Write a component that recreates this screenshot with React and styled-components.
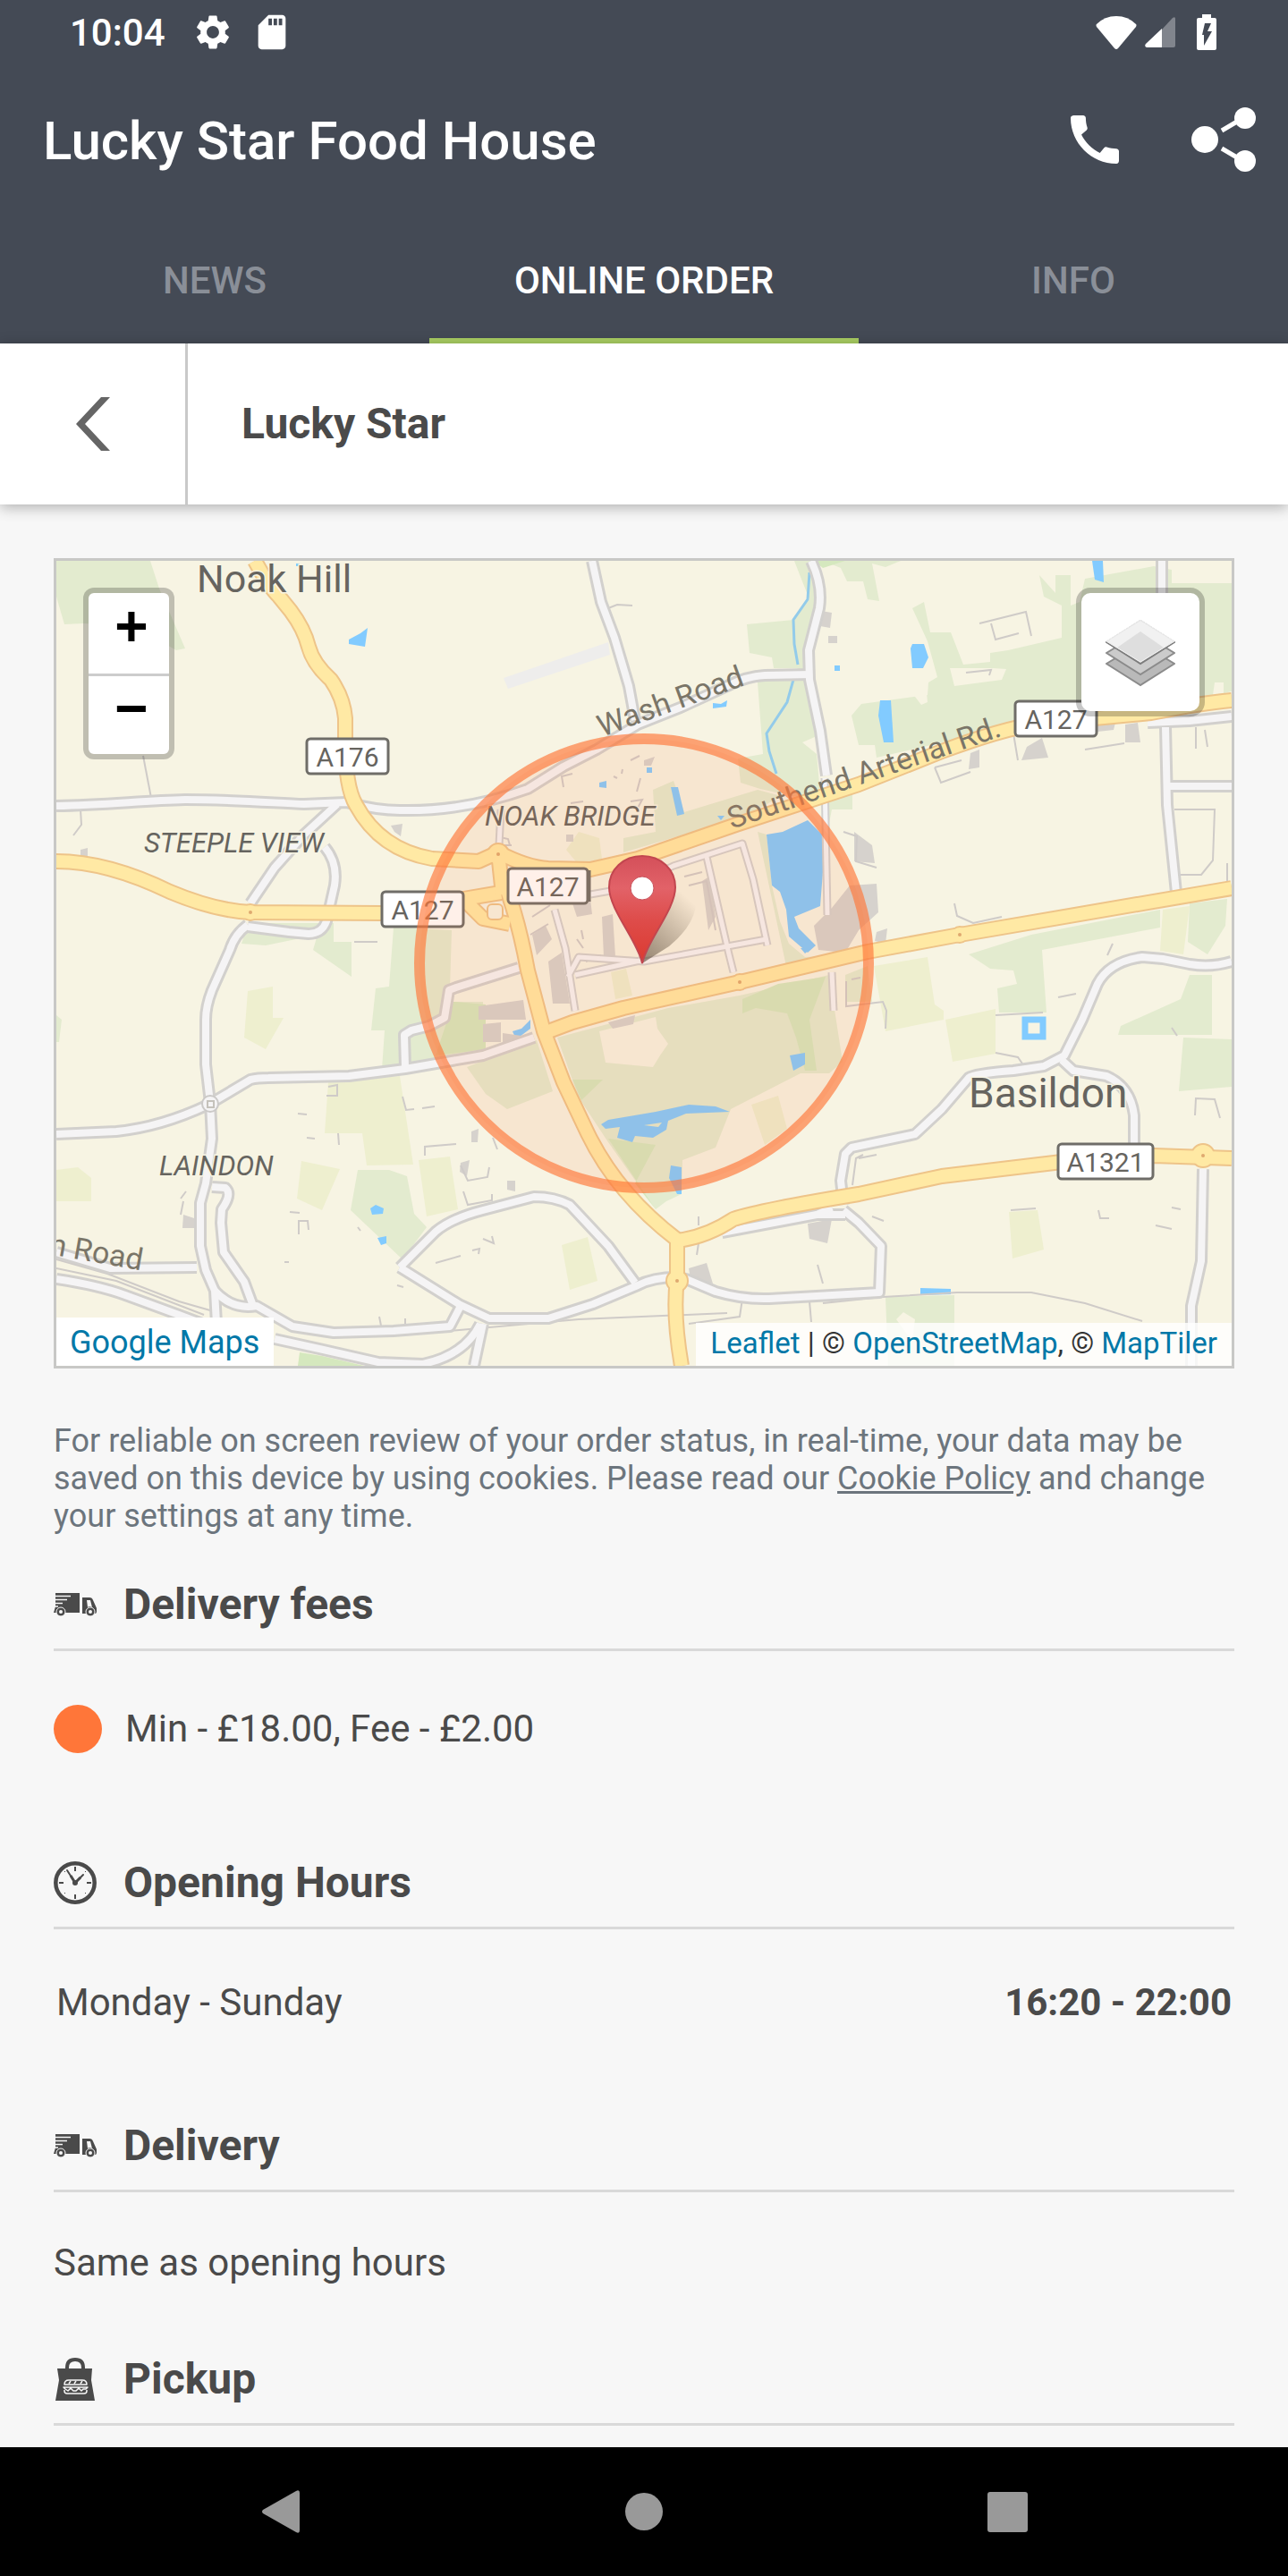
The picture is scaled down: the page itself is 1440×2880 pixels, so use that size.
import { useState } from "react";
import styled, { createGlobalStyle } from "styled-components";
import { MdCall, MdSdCard, MdSettings } from "react-icons/md";

const GlobalStyle = createGlobalStyle`
	* {
		box-sizing: border-box;
	}
	body {
		margin: 0;
		background: #f7f7f7;
		color: #4a4a4a;
		font-family: Roboto, sans-serif;
	}
	button {
		padding: 0;
		border: 0;
		background: none;
		font-family: inherit;
		cursor: pointer;
	}
	svg {
		display: block;
		flex-shrink: 0;
	}
`;

const Screen = styled.div`
	min-height: 100vh;
	display: flex;
	flex-direction: column;
`;

const Header = styled.header`
	background: #444a55;
	color: #fff;
`;

const StatusBar = styled.div`
	height: 72px;
	padding: 0 80px 0 78px;
	display: flex;
	align-items: center;
	justify-content: space-between;
`;

const StatusGroup = styled.div`
	display: flex;
	align-items: center;
	gap: ${(props) => props.$gap}px;
`;

const Clock = styled.span`
	margin-right: 10px;
	padding-top: 2px;
	font-size: 42px;
	line-height: 48px;
	font-weight: 500;
`;

const AppBar = styled.div`
	height: 168px;
	padding: 0 36px 0 48px;
	display: flex;
	align-items: center;
	gap: 72px;
`;

const AppTitle = styled.h1`
	margin: 0;
	padding-top: 4px;
	flex: 1;
	font-size: 60px;
	line-height: 72px;
	font-weight: 500;
`;

const IconButton = styled.button`
	color: #fff;
`;

const Tabs = styled.nav`
	display: grid;
	grid-template-columns: repeat(3, 1fr);
`;

const Tab = styled.button`
	height: 144px;
	padding-top: 8px;
	border-bottom: 6px solid ${(props) => (props.$active ? "#a9ce62" : "transparent")};
	color: ${(props) => (props.$active ? "#fff" : "#8a8f98")};
	font-size: 42px;
	font-weight: 500;
`;

const Toolbar = styled.div`
	height: 180px;
	display: flex;
	background: #fff;
	box-shadow: 0 3px 15px rgba(0, 0, 0, 0.3);
`;

const BackButton = styled.button`
	width: 210px;
	display: flex;
	align-items: center;
	justify-content: center;
	border-right: 3px solid #c9c9c9;
`;

const ToolbarTitle = styled.h2`
	margin: 0;
	padding-left: 60px;
	align-self: center;
	font-size: 48px;
	line-height: 56px;
	font-weight: 700;
`;

const Content = styled.main`
	flex: 1;
	padding: 60px 60px 24px;
`;

const MapFrame = styled.div`
	position: relative;
	border: 3px solid #c8c8c6;
	background: #f7f4e3;
`;

const MapDrawing = styled.svg`
	width: 100%;
	height: auto;
`;

const ZoomControl = styled.div`
	position: absolute;
	top: 30px;
	left: 30px;
	width: 102px;
	border: 6px solid rgba(0, 0, 0, 0.22);
	border-radius: 12px;
	background: #fff;
	background-clip: padding-box;
`;

const ZoomButton = styled.button`
	display: block;
	width: 100%;
	height: 90px;
	padding: 0 0 6px 6px;
	color: #000;
	font-family: "Liberation Mono", monospace;
	font-size: 64px;
	line-height: 72px;
	font-weight: 700;
	& + & {
		border-top: 3px solid #ccc;
	}
`;

const LayersButton = styled.button`
	position: absolute;
	top: 30px;
	right: 30px;
	width: 144px;
	height: 144px;
	padding-top: 4px;
	display: grid;
	place-items: center;
	border: 6px solid rgba(0, 0, 0, 0.22);
	border-radius: 16px;
	background: #fff;
	background-clip: padding-box;
`;

const MapLink = styled.a`
	color: #0078a8;
	text-decoration: none;
`;

const GoogleBox = styled.div`
	position: absolute;
	left: 0;
	bottom: 0;
	padding: 6px 16px 4px 15px;
	background: #fff;
	font-size: 36px;
	line-height: 44px;
`;

const Attribution = styled.div`
	position: absolute;
	right: 0;
	bottom: 0;
	padding: 2px 16px 4px;
	background: rgba(255, 255, 255, 0.8);
	color: #333;
	font-size: 33px;
	line-height: 42px;
`;

const CookieNote = styled.p`
	margin: 60px 0 50px;
	color: #6c757d;
	font-size: 36px;
	line-height: 42px;
	a {
		color: inherit;
	}
`;

const SectionHeader = styled.h3`
	margin: 0;
	padding-bottom: 21px;
	display: flex;
	align-items: center;
	gap: 30px;
	border-bottom: 3px solid #d9d9d9;
	font-size: 48px;
	line-height: 56px;
	font-weight: 700;
`;

const FeeRow = styled.div`
	padding: 60px 0 117px;
	display: flex;
	align-items: center;
	gap: 26px;
	font-size: 42px;
	line-height: 54px;
`;

const FeeDot = styled.span`
	width: 54px;
	height: 54px;
	border-radius: 50%;
	background: #ff7639;
`;

const HoursTable = styled.table`
	width: 100%;
	margin: 55px 0 105px;
	border-collapse: collapse;
	font-size: 42px;
	line-height: 54px;
	th {
		padding: 0 3px;
		font-weight: 400;
		text-align: left;
	}
	td {
		padding: 0 3px;
		font-weight: 700;
		text-align: right;
	}
`;

const SectionText = styled.p`
	margin: 52px 0 75px;
	font-size: 42px;
	line-height: 54px;
`;

const NavBar = styled.footer`
	height: 144px;
	padding: 0 111px;
	display: grid;
	grid-template-columns: repeat(3, 1fr);
	justify-items: center;
	align-items: center;
	background: #000;
`;

const park = [
	"63,627 168,627 178,658 207,725 197,727 150,700 93,697 72,698 63,667",
	"888,627 897,650 905,670 887,693 835,698 838,730 863,735 865,747 893,747 847,763 853,843 825,848 828,875 850,882 900,893 917,887 913,843 897,830 913,823 905,760 907,700 915,650 910,627",
	"1310,652 1377,652 1377,773 1347,780 1133,807 1110,817 980,847 978,833 960,833 952,800 963,787 1037,777 1038,763 1048,757 1037,717 1020,680 1033,673 1040,707 1063,707 1077,743 1107,740 1107,730 1127,727 1187,713 1187,677 1167,667 1162,643 1180,663 1180,643 1197,643 1197,677 1207,673 1213,647 1290,633 1310,637",
	"920,627 1007,627 990,634 975,630 983,672 970,670 965,650 947,650 940,635",
	"927,895 953,887 953,905 930,905 927,920",
	"1083,1067 1153,1045 1297,1017 1297,1037 1165,1062 1170,1132 1117,1132 1115,1105 1137,1100 1133,1085 1107,1083",
	"1330,1010 1372,1005 1370,1035 1350,1067 1328,1053",
	"1330,1090 1355,1090 1355,1157 1250,1157 1253,1147 1320,1117",
	"1323,1160 1377,1162 1377,1215 1318,1220",
	"990,1450 1067,1448 1067,1527 993,1527",
	"293,1032 373,1032 373,1053 393,1053 393,1092 350,1062 355,1045 297,1057 270,1055 275,1040",
	"440,1037 505,1040 503,1105 497,1120 540,1120 540,1175 453,1193 427,1195 430,1152 415,1152 420,1105 435,1103",
	"63,1135 69,1140 66,1165 63,1165",
	"400,1308 435,1308 455,1315 463,1357 477,1372 450,1408 392,1353",
	"623,1160 747,1127 827,1113 927,1090 942,1187 927,1200 895,1200 817,1240 800,1283 763,1297 762,1335 745,1343 733,1352 680,1277 647,1227",
	"522,1193 600,1163 618,1220 567,1240 543,1223",
	"730,883 753,873 765,908 847,883 873,890 833,913 697,953 697,937 733,930",
	"847,930 857,933 863,990 872,1030 882,1055 900,1070 942,1068 880,1085",
	"945,1090 970,1080 975,1120 945,1120",
];

const meadow = [
	"1300,1017 1330,1013 1323,1067 1297,1063",
	"977,1080 1037,1070 1045,1123 1055,1130 1055,1140 990,1153",
	"1057,1140 1113,1128 1113,1178 1065,1187",
	"1128,1355 1160,1353 1167,1397 1132,1407",
	"277,1108 305,1103 305,1138 317,1138 297,1173 273,1160",
	"367,1210 447,1203 462,1302 410,1303 405,1267 363,1267",
	"337,1298 380,1307 360,1353 332,1340",
	"468,1297 503,1293 512,1352 477,1360",
	"63,1308 87,1305 102,1317 102,1343 63,1343",
	"628,1392 657,1383 668,1432 637,1442",
	"633,950 647,930 670,937 673,960 647,967",
	"683,1087 700,1083 707,1113 688,1117",
	"840,1235 870,1225 880,1262 855,1280",
];

const wood = [
	"830,1117 870,1100 923,1092 905,1140 913,1197 900,1197 890,1160 880,1133 845,1127 830,1133",
	"507,1120 543,1123 543,1173 487,1180",
	"640,1207 674,1207 650,1230",
	"680,1273 733,1280 710,1323 733,1352",
	"335,1512 360,1516 407,1527 333,1527",
	"910,627 945,627 920,635",
];

const water = [
	"857,933 875,930 903,917 923,937 917,1013 888,1025 893,1038 912,1057 903,1065 882,1047 879,1017 872,997 863,990",
	"672,1257 680,1252 733,1243 770,1235 800,1237 816,1243 767,1245 747,1253 745,1263 730,1272 710,1270 707,1277 690,1272 693,1260 677,1262",
	"883,1180 900,1177 900,1190 887,1197",
	"750,1303 762,1305 762,1335 757,1335 748,1317",
	"573,1153 583,1150 593,1140 593,1150 577,1162",
	"750,880 758,880 765,910 757,912",
	"1221,627 1233,627 1234,651 1224,648",
	"1020,720 1033,720 1038,735 1032,747 1020,747 1018,725",
	"984,783 996,783 999,830 988,830 982,800",
	"390,715 403,708 411,702 408,723 390,720",
	"797,786 806,787 813,783 812,790 797,792",
	"723,858 729,858 729,864 723,864",
	"670,875 678,873 678,881 670,880",
	"933,744 939,744 939,750 933,750",
	"802,912 810,912 806,917",
	"895,1060 907,1060 900,1066",
	"414,1351 420,1347 429,1351 428,1357 416,1358",
	"422,1384 432,1382 432,1390 426,1392",
	"1029,1440 1063,1441 1063,1447 1029,1448",
	"331,630 335,630 335,633 331,633",
];

const buildings = [
	"595,1045 610,1035 617,1050 600,1068",
	"613,1075 628,1065 637,1122 618,1122",
	"673,1025 685,1022 688,1070 675,1070",
	"640,1010 660,1005 662,1022 645,1025",
	"535,1125 585,1118 588,1140 535,1140",
	"540,1145 560,1143 560,1165 540,1165",
	"562,1155 583,1158 583,1165 562,1166",
	"910,1035 930,1015 950,990 980,988 982,1020 960,1040 945,1065 915,1062",
	"980,1042 992,1038 990,1055 978,1052",
	"955,930 975,945 978,965 955,963",
	"1085,842 1095,838 1095,858 1083,860",
	"1148,835 1165,825 1172,847 1142,850",
	"1258,810 1272,808 1275,830 1258,830",
	"1226,808 1247,808 1245,816 1227,818",
	"918,683 930,685 928,702 917,700",
	"926,711 936,711 936,719 926,719",
	"903,1368 930,1363 925,1390 905,1385",
	"770,1418 790,1412 797,1435 772,1430",
	"205,1358 217,1362 217,1373 204,1373",
	"515,1300 525,1297 522,1315 514,1310",
	"527,1265 535,1262 534,1277 527,1277",
	"567,1320 576,1320 576,1332 567,1330",
	"437,923 450,921 448,935 441,930",
	"90,950 98,948 98,957 90,957",
	"680,1143 710,1135 708,1145 685,1150",
	"720,850 732,846 728,856 720,856",
	"633,933 641,933 641,941 633,941",
	"785,985 793,980 800,1025 792,1040",
];

const lanes = [
	"M160,845 L169,892",
	"M90,905 L91,922 L82,934",
	"M680,680 L690,676 L707,677",
	"M1095,697 L1147,684 L1153,711 M1108,697 L1113,715 L1139,708",
	"M1080,752 L1108,749 L1106,755",
	"M1133,820 L1138,850 M1045,858 L1052,875 L1085,863 M1045,858 L1075,850",
	"M1213,838 L1257,831",
	"M1337,813 L1337,837 M1347,816 L1350,835",
	"M1313,905 L1358,905 L1356,962 L1343,978 L1320,978",
	"M1372,965 L1372,985",
	"M1067,1010 L1070,1024 L1088,1032 L1120,1025",
	"M943,930 L958,935 L957,963 L980,970",
	"M952,1095 L962,1093 M946,1097 L946,1125 L987,1120 L991,1130 L990,1150",
	"M1113,1135 L1166,1132",
	"M1113,1177 L1138,1182 L1145,1192",
	"M1336,1247 L1337,1228 L1358,1229 L1364,1250",
	"M1238,1068 L1244,1055",
	"M1183,1115 L1203,1111",
	"M1310,1149 L1316,1158",
	"M367,1215 L377,1213 L377,1226 M365,1225 L377,1225",
	"M396,1053 L422,1053",
	"M378,1267 L379,1280",
	"M450,1226 L454,1241 L463,1240 M472,1239 L486,1237",
	"M475,1292 L475,1282 L510,1279",
	"M333,1245 L343,1246 M343,1272 L352,1273",
	"M324,1355 L335,1356",
	"M334,1380 L334,1365 L344,1365 L345,1375",
	"M400,1372 L403,1376 M318,1411 L323,1411 M444,1437 L451,1439",
	"M487,1412 L515,1404",
	"M424,1472 L426,1482 M453,1474 L453,1482",
	"M515,1303 L523,1320 L545,1316 L547,1305",
	"M518,1332 L523,1347 L550,1342 L550,1335",
	"M528,1398 L536,1396 L535,1402 M540,1385 L552,1390 L550,1382",
	"M551,1272 L556,1285",
	"M914,1414 L920,1435",
	"M63,1408 L120,1424 L200,1455 L235,1465",
	"M63,1418 L130,1432 L228,1470",
	"M202,1340 L208,1332 M202,1358 L205,1343",
	"M480,1490 L647,1475 L813,1468 M920,1457 L987,1450 L1070,1445 L1153,1445 L1213,1457 L1277,1477",
	"M830,1452 L827,1472 L770,1480 M905,1455 L907,1478",
	"M595,1025 L615,1012 M593,1045 L613,1033 M655,1075 L672,1068 M652,1050 L650,1040",
	"M555,935 L568,938 L570,945 M558,945 L572,945",
	"M630,880 L628,868 L640,865 M705,850 L715,845 M695,865 L696,860 M716,870 L712,885",
	"M638,898 L652,896 M705,896 L718,894 L712,905 M690,870 L686,868",
	"M765,980 L785,975 M770,990 L790,985 L800,1040 M645,1050 L652,1060",
	"M975,1360 L988,1365 M1310,1350 L1320,1352 M1228,1353 L1230,1362 L1240,1362 M1292,1370 L1310,1374",
	"M1130,1353 L1158,1351",
	"M781,1360 L781,1370 M781,1390 L779,1403",
	"M960,1295 L980,1291 M953,1325 L957,1295 L965,1291",
];

const streets = [
	"M63,901 C120,900 160,895 207,894 C260,894 310,898 340,899 L387,897 C410,903 430,906 447,906 C490,907 540,900 590,882 L630,857 L667,838 L713,810 L763,790 L813,767 Q835,756 855,755 L908,754",
	"M377,899 L340,933 L307,970 L280,1010",
	"M363,947 Q378,965 374,990 L365,1030 Q360,1044 345,1044 L323,1042 L277,1036",
	"M277,1034 Q262,1045 257,1062 L237,1107 Q230,1125 230,1140 L230,1190 L235,1233 L237,1273 L230,1323 L224,1345 L224,1393 L230,1420 L240,1443 L242,1480",
	"M63,1268 L130,1265 Q180,1260 233,1235 L280,1207 Q288,1205 300,1205 L390,1203 L453,1195 L540,1180 L597,1160",
	"M453,1193 L452,1157 L460,1152 L480,1147 L497,1138 L502,1107 L510,1104 L580,1082",
	"M662,627 L672,673 L687,713 L703,767 L710,805",
	"M907,627 Q920,655 916,680 L904,727 L905,760 L917,817 L924,867",
	"M1299,627 L1299,700 M1303,813 L1305,900 L1315,998",
	"M1283,808 L1330,806 L1377,801 M1305,879 L1377,879",
	"M943,1347 L940,1320 L945,1290 L952,1283 L1023,1268 L1053,1240 L1083,1205 Q1090,1200 1133,1197 L1167,1192 L1190,1180 L1210,1140 L1227,1100 Q1240,1075 1277,1070 L1300,1072 L1330,1078 Q1355,1082 1377,1075",
	"M1187,1185 L1200,1197 L1237,1203 Q1264,1215 1268,1247 L1268,1280",
	"M1345,1307 L1343,1410 L1332,1460 L1332,1527",
	"M447,1417 L487,1377 Q505,1362 540,1353 L597,1338 Q620,1338 637,1347 L680,1393 L710,1434",
	"M447,1417 L513,1458 L547,1474 L613,1474 L663,1458 L713,1437 Q730,1428 757,1428 L767,1430 L800,1444 Q830,1453 860,1452 L983,1445 L985,1393 L960,1367 L943,1353",
	"M807,1378 L913,1358 L945,1358",
	"M63,1430 Q110,1437 140,1448 L200,1470 L240,1485",
	"M240,1443 Q260,1465 287,1460 L327,1483 L373,1490 L440,1488 L503,1483 L515,1460",
	"M307,1497 L357,1508 L423,1523 L473,1525 Q520,1515 537,1480",
	"M237,1327 L252,1328 Q260,1335 248,1352 L247,1367 L250,1400 L273,1433 L283,1460",
	"M63,1400 L123,1418 L220,1417",
	"M913,1358 L930,1350",
	"M540,1480 L530,1527",
];

const estateRoads = [
	"M660,1000 L700,993 L753,968 L830,943 L842,983 L858,1057",
	"M790,958 L815,1067 L820,1087",
	"M635,1092 L647,1070 L720,1075 L857,1050",
	"M620,1017 L632,1060 L643,1130",
	"M643,1090 L720,1073",
	"M560,905 L558,945",
	"M930,1087 L932,1130",
	"M922,870 L925,1023",
];

const mainRoads = [
	"M285,627 Q300,655 312,667 L325,683 Q340,703 345,723 Q350,742 370,760 Q384,780 386,803 L386,827 Q386,880 398,900 Q425,950 483,960 L535,963 L557,953 Q590,970 613,971 L660,972 L713,960 L823,922 L960,877 L1053,840 Q1120,815 1160,809 L1287,797 Q1350,785 1377,783",
	"M63,963 Q120,963 190,997 Q240,1018 280,1020 L427,1021 L518,1005 L560,998",
	"M557,953 L562,1000 M520,1007 L540,1027 L570,1033",
	"M565,990 Q580,1030 590,1085 L608,1153 L630,1210 L657,1267 Q690,1335 757,1386 L757,1430 Q752,1470 762,1527",
	"M608,1155 L640,1143 L697,1127 L827,1098 L970,1064 L1073,1045 L1377,993",
	"M757,1387 Q790,1383 820,1363 Q850,1353 960,1335 L1053,1315 L1187,1299 L1290,1292 L1377,1295",
];

const junctions = [
	[557, 955, 12],
	[827, 1098, 9],
	[1073, 1045, 9],
	[280, 1020, 9],
	[1345, 1292, 13],
	[757, 1432, 12],
];

const shields = [
	{ x: 342, y: 825, w: 93, name: "A176" },
	{ x: 426, y: 996, w: 93, name: "A127" },
	{ x: 567, y: 970, w: 91, name: "A127" },
	{ x: 1134, y: 783, w: 93, name: "A127" },
	{ x: 1182, y: 1278, w: 108, name: "A1321" },
];

const AreaMap = () => (
	<MapDrawing viewBox="63 627 1314 900" role="img" aria-label="Delivery area">
		<defs>
			<linearGradient id="pin" x1="0" y1="0" x2="0" y2="1">
				<stop offset="0" stopColor="#d4505a" />
				<stop offset="0.3" stopColor="#e26268" />
				<stop offset="0.6" stopColor="#de4c4a" />
				<stop offset="1" stopColor="#dc3a30" />
			</linearGradient>
			<linearGradient id="pinShadow" x1="0" y1="1" x2="0.7" y2="0">
				<stop offset="0" stopColor="#443322" stopOpacity="0.7" />
				<stop offset="1" stopColor="#443322" stopOpacity="0" />
			</linearGradient>
		</defs>
		<rect x="63" y="627" width="1314" height="900" fill="#f7f4e3" />
		<g fill="#e3ebcf">
			{park.map((points) => (
				<polygon key={points} points={points} />
			))}
		</g>
		<g fill="#eeefcf">
			{meadow.map((points) => (
				<polygon key={points} points={points} />
			))}
		</g>
		<g fill="#d5e8be">
			{wood.map((points) => (
				<polygon key={points} points={points} />
			))}
		</g>
		<g fill="#f7f4e3">
			<polygon points="1062,747 1110,747 1125,748 1120,760 1067,767" />
			<polygon points="1020,775 1036,775 1037,785 1030,788" />
			<polygon points="670,1153 733,1137 735,1150 747,1167 738,1180 730,1193 677,1188" />
			<polygon points="1358,763 1368,763 1368,775 1356,777" />
			<polygon points="1002,1475 1010,1467 1023,1475 1020,1500" />
		</g>
		<polygon points="563,758 680,718 682,732 568,770" fill="#eeedec" />
		<g fill="#82cbff">
			{water.map((points) => (
				<polygon key={points} points={points} />
			))}
		</g>
		<rect x="1146" y="1140" width="20" height="19" fill="none" stroke="#82cbff" strokeWidth="7" />
		<polygon points="720,1258 740,1255 736,1260" fill="#e3ebcf" />
		<path
			d="M905,640 L903,670 L887,693 L888,720 L892,743 M887,760 L880,785 L857,820 L860,840 L868,865"
			fill="none"
			stroke="#93cbea"
			strokeWidth="3"
		/>
		<g fill="#d6d2cd">
			{buildings.map((points) => (
				<polygon key={points} points={points} />
			))}
		</g>
		<g fill="none" stroke="#cfcbc8" strokeWidth="2">
			{lanes.map((d) => (
				<path key={d} d={d} />
			))}
		</g>
		<g fill="none" strokeLinejoin="round">
			<g stroke="#d2d0cd" strokeWidth="14">
				{streets.map((d) => (
					<path key={d} d={d} />
				))}
			</g>
			<g stroke="#d2d0cd" strokeWidth="9">
				{estateRoads.map((d) => (
					<path key={d} d={d} />
				))}
			</g>
			<g stroke="#f5f4f5" strokeWidth="5">
				{estateRoads.map((d) => (
					<path key={d} d={d} />
				))}
			</g>
			<g stroke="#f5f4f5" strokeWidth="8">
				{streets.map((d) => (
					<path key={d} d={d} />
				))}
			</g>
		</g>
		<circle cx="235" cy="1234" r="9" fill="#f5f4f5" stroke="#cbc9c7" strokeWidth="2" />
		<rect x="232" y="1231" width="7" height="7" fill="none" stroke="#c5c2bb" strokeWidth="2" />
		<g fill="none" stroke="#eec489" strokeWidth="18" strokeLinejoin="round">
			{mainRoads.map((d) => (
				<path key={d} d={d} />
			))}
		</g>
		<g fill="#ffe9a4" stroke="#eec489" strokeWidth="2">
			{junctions.map(([cx, cy, r]) => (
				<circle key={cx + cy} cx={cx} cy={cy} r={r} />
			))}
		</g>
		<g fill="none" stroke="#ffe9a4" strokeWidth="14" strokeLinejoin="round">
			{mainRoads.map((d) => (
				<path key={d} d={d} />
			))}
		</g>
		<g fill="#dfa970">
			{junctions.map(([cx, cy]) => (
				<circle key={cx + cy} cx={cx} cy={cy} r="2" />
			))}
		</g>
		<rect x="545" y="1011" width="17" height="17" rx="5" fill="#f7f4e3" stroke="#eec489" strokeWidth="2" />

		<g fill="#fff" stroke="#6f6d68" strokeWidth="3">
			{shields.map(({ x, y, w }) => (
				<rect key={x} x={x + 1} y={y + 1} width={w - 2} height="39" rx="4" />
			))}
			<path d="M659,973 V1008" />
		</g>
		<g fontFamily="Roboto, sans-serif" fill="#66645f">
			<g fontSize="30" textAnchor="middle">
				{shields.map(({ x, y, w, name }) => (
					<text key={x} x={x + w / 2} y={y + 32}>
						{name}
					</text>
				))}
			</g>
			<g stroke="#f7f4e3" strokeWidth="3" paintOrder="stroke">
				<text x="220" y="662" fontSize="43">
					Noak Hill
				</text>
				<text x="1083" y="1238" fontSize="46">
					Basildon
				</text>
				<g fontSize="31" fontStyle="italic">
					<text x="161" y="953">STEEPLE VIEW</text>
					<text x="542" y="923">NOAK BRIDGE</text>
					<text x="178" y="1314">LAINDON</text>
				</g>
			</g>
			<g fontSize="34" fill="#7a7568">
				<text transform="translate(673 824) rotate(-20)">Wash Road</text>
				<text transform="translate(818 927) rotate(-19)">Southend Arterial Rd.</text>
				<text transform="translate(54 1402) rotate(10)">n Road</text>
			</g>
		</g>

		<circle
			cx="720"
			cy="1077"
			r="251"
			fill="#ff7638"
			fillOpacity="0.11"
			stroke="#ff7638"
			strokeOpacity="0.65"
			strokeWidth="12"
		/>

		<path d="M718,1077 L740,1010 Q765,988 778,1000 Q782,1030 748,1058 Z" fill="url(#pinShadow)" opacity="0.8" />
		<path
			d="M718,1077 C713,1052 681,1017 681,992 C681,972 697,957 718,957 C739,957 755,972 755,992 C755,1017 723,1052 718,1077 Z"
			fill="url(#pin)"
			stroke="#c2464f"
			strokeWidth="2"
		/>
		<circle cx="718" cy="993" r="13" fill="#fff" stroke="#c8505a" strokeWidth="1" />
	</MapDrawing>
);

const LayersIcon = () => (
	<svg width="78" height="76" viewBox="0 0 78 76">
		<g stroke="#8b8b8b" strokeWidth="2">
			<path d="M1,49 L39,26 L77,49 L39,73 Z" fill="#b9b9b9" />
			<path d="M1,37 L39,14 L77,37 L39,61 Z" fill="#cbcbcb" />
			<path d="M1,25 L39,1 L77,25 L39,49 Z" fill="#dcdcdc" stroke="#7d7d7d" />
		</g>
		<path d="M1,24 L39,0 L77,24 L39,47 Z" fill="#dedede" stroke="#f0f0f0" />
		<path d="M2,24 L39,1 L76,24 L65,31 L39,13 L13,31 Z" fill="#f1f1f1" />
	</svg>
);

const WifiIcon = () => (
	<svg width="46" height="37" viewBox="0 0 46 37" fill="#fff">
		<path d="M1,9 Q10,0 23,0 Q36,0 45,9 Q46,10 45,12 L25,36 Q23,38 21,36 L1,12 Q0,10 1,9 Z" />
	</svg>
);

const SignalIcon = () => (
	<svg width="34" height="34" viewBox="0 0 34 34">
		<path d="M19,14 L31,1 Q34,-1 34,2 V32 Q34,34 32,34 H19 Z" fill="#81858d" />
		<path d="M19,13 V34 H2 Q-1,33 1,30 Z" fill="#fff" />
	</svg>
);

const BatteryIcon = () => (
	<svg width="22" height="40" viewBox="0 0 22 40">
		<path d="M6,0 H16 V4 H20 Q22,4 22,6 V38 Q22,40 20,40 H2 Q0,40 0,38 V6 Q0,4 2,4 H6 Z" fill="#fff" />
		<path d="M9,10 H16 L12,19 H17 L8,35 V23 H6 Z" fill="#444a55" />
	</svg>
);

const ShareIcon = () => (
	<svg width="72" height="72" viewBox="0 0 72 72" fill="#fff">
		<circle cx="15" cy="36" r="15" />
		<circle cx="60" cy="12" r="12" />
		<circle cx="60" cy="60" r="12" />
		<path d="M34,26 L56,13 M34,46 L56,59" stroke="#fff" strokeWidth="5" />
	</svg>
);

const BackIcon = () => (
	<svg width="38" height="60" viewBox="0 0 38 60" fill="#656565">
		<path d="M28,0 H38 L10,30 L38,60 H28 L0,30 Z" />
	</svg>
);

const TruckIcon = () => (
	<svg width="48" height="48" viewBox="0 0 48 48" fill="#4a4a4a">
		<path d="M2,11 H29 V33 H0 L2,26 Z" />
		<path d="M0,14.5 H19 M0,18.5 H15 M0,22.5 H10 M0,26 H5" stroke="#f7f7f7" strokeWidth="1.5" />
		<path
			fillRule="evenodd"
			d="M32,16 H40 Q43,16 44,19 L48,28 V32 Q48,34 46,34 H32 Z M37,19 H41 L43,27 Q40,25 38,27 Z"
		/>
		<g stroke="#f7f7f7" strokeWidth="1">
			<circle cx="8" cy="32" r="5" />
			<circle cx="41" cy="32" r="5" />
		</g>
		<circle cx="8" cy="32" r="2" fill="#f7f7f7" />
		<circle cx="41" cy="32" r="2" fill="#f7f7f7" />
	</svg>
);

const ClockIcon = () => (
	<svg width="48" height="48" viewBox="0 0 48 48" fill="none" stroke="#4a4a4a">
		<circle cx="24" cy="24" r="21.7" strokeWidth="4.5" />
		<path d="M24,6 V11 M24,37 V42 M6,24 H11 M37,24 H42" strokeWidth="2" />
		<path d="M35,12 L36,11 M35,35 L36,36 M13,35 L12,36 M13,12 L12,11" strokeWidth="1" />
		<path d="M24,24 L15,10 M24,24 L33,15" strokeWidth="2" strokeLinecap="round" />
		<path d="M24,24 L19,16 M24,24 L30,18" strokeWidth="3" />
		<circle cx="24" cy="24" r="3" fill="#4a4a4a" stroke="none" />
	</svg>
);

const BagIcon = () => (
	<svg width="48" height="48" viewBox="0 0 48 48">
		<path d="M15,13 V11 Q15,2 24,2 Q33,2 33,11 V13" fill="none" stroke="#4a4a4a" strokeWidth="4" />
		<path d="M4,12 H43 L42,25 L46,48 H2 L6,25 Z" fill="#4a4a4a" />
		<g fill="none" stroke="#f7f7f7" strokeWidth="1.5" strokeLinejoin="round">
			<path d="M12,30 Q12,25 17,25 H32 Q37,25 37,30 Z" />
			<path d="M17,29 L19,26 M23,29 L25,26 M30,29 L32,26" />
			<path d="M11,33 H38 L36,35 H33 L31,37 L28,34 L25,37 H22 L19,34 L16,37 L13,35 Z" />
			<path d="M12,36 V37 Q12,40 15,40 H34 Q37,40 37,37 V36" />
		</g>
	</svg>
);

const tabs = ["NEWS", "ONLINE ORDER", "INFO"];

const App = () => {
	const [activeTab, setActiveTab] = useState("ONLINE ORDER");

	return (
		<Screen>
			<GlobalStyle />
			<Header>
				<StatusBar>
					<StatusGroup $gap={20}>
						<Clock>10:04</Clock>
						<MdSettings size={46} />
						<MdSdCard size={46} />
					</StatusGroup>
					<StatusGroup $gap={24}>
						<StatusGroup $gap={9}>
							<WifiIcon />
							<SignalIcon />
						</StatusGroup>
						<BatteryIcon />
					</StatusGroup>
				</StatusBar>
				<AppBar>
					<AppTitle>Lucky Star Food House</AppTitle>
					<IconButton aria-label="Call">
						<MdCall size={72} />
					</IconButton>
					<IconButton aria-label="Share">
						<ShareIcon />
					</IconButton>
				</AppBar>
				<Tabs>
					{tabs.map((tab) => (
						<Tab key={tab} $active={tab === activeTab} onClick={() => setActiveTab(tab)}>
							{tab}
						</Tab>
					))}
				</Tabs>
			</Header>
			<Toolbar>
				<BackButton aria-label="Back">
					<BackIcon />
				</BackButton>
				<ToolbarTitle>Lucky Star</ToolbarTitle>
			</Toolbar>
			<Content>
				<MapFrame>
					<AreaMap />
					<ZoomControl>
						<ZoomButton aria-label="Zoom in">+</ZoomButton>
						<ZoomButton aria-label="Zoom out">−</ZoomButton>
					</ZoomControl>
					<LayersButton aria-label="Layers">
						<LayersIcon />
					</LayersButton>
					<GoogleBox>
						<MapLink href="#google-maps">Google Maps</MapLink>
					</GoogleBox>
					<Attribution>
						<MapLink href="#leaflet">Leaflet</MapLink> | © <MapLink href="#osm">OpenStreetMap</MapLink>, ©{" "}
						<MapLink href="#maptiler">MapTiler</MapLink>
					</Attribution>
				</MapFrame>
				<CookieNote>
					For reliable on screen review of your order status, in real-time, your data may be saved on this device
					by using cookies. Please read our <a href="#cookies">Cookie Policy</a> and change your settings at any
					time.
				</CookieNote>
				<SectionHeader>
					<TruckIcon />
					Delivery fees
				</SectionHeader>
				<FeeRow>
					<FeeDot />
					Min - £18.00, Fee - £2.00
				</FeeRow>
				<SectionHeader>
					<ClockIcon />
					Opening Hours
				</SectionHeader>
				<HoursTable>
					<tbody>
						<tr>
							<th scope="row">Monday - Sunday</th>
							<td>16:20 - 22:00</td>
						</tr>
					</tbody>
				</HoursTable>
				<SectionHeader>
					<TruckIcon />
					Delivery
				</SectionHeader>
				<SectionText>Same as opening hours</SectionText>
				<SectionHeader>
					<BagIcon />
					Pickup
				</SectionHeader>
			</Content>
			<NavBar>
				<IconButton aria-label="System back">
					<svg width="42" height="48" viewBox="0 0 42 48" fill="#999">
						<path d="M1,22 L38,1 Q42,-1 42,3 V45 Q42,49 38,47 L1,26 Q-1,24 1,22 Z" />
					</svg>
				</IconButton>
				<IconButton aria-label="Home">
					<svg width="42" height="42" viewBox="0 0 42 42" fill="#999">
						<circle cx="21" cy="21" r="21" />
					</svg>
				</IconButton>
				<IconButton aria-label="Recent apps">
					<svg width="45" height="45" viewBox="0 0 45 45" fill="#999">
						<rect width="45" height="45" rx="3" />
					</svg>
				</IconButton>
			</NavBar>
		</Screen>
	);
};

export default App;
